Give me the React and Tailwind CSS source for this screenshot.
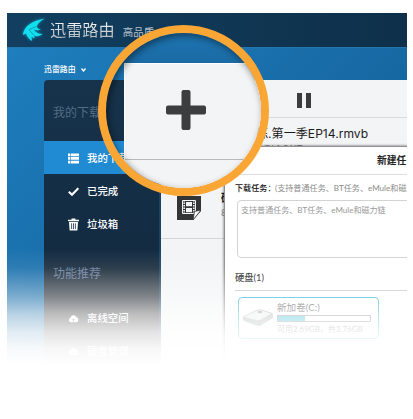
import React from 'react';

const cjk = "font-['Lato','Noto_Sans_CJK_SC',sans-serif]";

function Bird() {
  return (
    <svg viewBox="0 0 26 26" className="h-[26px] w-[26px] shrink-0 drop-shadow-[0_0_1.5px_#0aa5c8]">
      <path
        d="M24 1.5C17 2.5 9 5.5 5 10.5C3 13 2 15.5 2 18L5 16.5C6 19.5 8 22 11 24L10.5 19.8L13.5 21.5L13 18.5C16 19.8 19 19 21.5 17C17.5 17 14 15 12.5 12.5C15 13.5 18 13.5 20 12.8C17.5 12 16 11 15.5 9.5C17 6 20 3.5 24 1.5Z"
        fill="#12dfee"
      />
      <path d="M15.5 9.5L8 12.5L13 18.5" fill="none" stroke="#0b93b2" strokeWidth="0.8" />
    </svg>
  );
}

function ListIcon() {
  return (
    <svg viewBox="0 0 11 11" className="h-[11px] w-[11px]" fill="#fff">
      <path d="M0 .5h2v2.7H0zM2.6 .5H11v2.7H2.6zM0 4.1h2v2.7H0zM2.6 4.1H11v2.7H2.6zM0 7.7h2v2.7H0zM2.6 7.7H11v2.7H2.6z" />
    </svg>
  );
}

function CheckIcon() {
  return (
    <svg viewBox="0 0 11 11" className="h-[11px] w-[11px]" fill="none" stroke="#fff" strokeWidth="2.1">
      <path d="M.8 5.8L4 8.8L10.3 2.2" />
    </svg>
  );
}

function TrashIcon() {
  return (
    <svg viewBox="0 0 11 13" className="h-[13px] w-[11px]">
      <path d="M0 1.7h3.5V.4h4v1.3H11v1.5H0zM1 4h9l-.6 8.6H1.6z" fill="#fff" />
      <path d="M3.6 5.3v5.8M5.5 5.3v5.8M7.4 5.3v5.8" stroke="#142f47" strokeWidth=".8" />
    </svg>
  );
}

function CloudIcon() {
  return (
    <svg viewBox="0 0 11 9" className="h-[9px] w-[11px]">
      <path d="M2.6 8.3A2.4 2.4 0 0 1 2.4 3.7A3.2 3.2 0 0 1 8.4 3.1A2.7 2.7 0 0 1 8.5 8.3z" fill="#fff" />
      <path d="M5.5 8.4V5M4.2 6.2L5.5 4.8L6.8 6.2" fill="none" stroke="#5b6268" strokeWidth=".9" />
    </svg>
  );
}

function FilmIcon() {
  return (
    <svg viewBox="0 0 24 24" className="h-6 w-6 shrink-0">
      <path d="M0 0h24v15l-8 9H0z" fill="#333435" />
      <path d="M5.5 4.5h13v13h-13z" fill="none" stroke="#f3f4f6" strokeWidth="1" />
      <path d="M7.2 4v14M16.8 4v14" stroke="#f3f4f6" strokeWidth="1.6" strokeDasharray="1.5 1" />
      <path d="M9 6h6v4.3H9zM9 12h6v4.3H9z" fill="#f3f4f6" />
      <path d="M24 14l-6.5 1.5L16 24z" fill="#fff" stroke="#333435" strokeWidth=".8" />
    </svg>
  );
}

function DriveIcon() {
  return (
    <svg viewBox="0 0 32 18" className="h-[18px] w-8 shrink-0">
      <path d="M1 8L14 1.5Q17 .5 20 1L30 4Q31 4.5 31 6V9L19 16.5Q17 17.5 14 16.5L2 12Q1 11 1 10z" fill="#a4a8aa" />
      <path d="M1 8L14 1.5Q17 .5 20 1L30 4.5L18 11.5Q16 12 14 11.5z" fill="#e8eaeb" stroke="#888" strokeWidth=".5" />
      <ellipse cx="18" cy="3" rx="2.4" ry="1" fill="#777" />
      <path d="M17 13v3" stroke="#43b82c" strokeWidth="1.2" />
    </svg>
  );
}

function Item({ icon, label, active }) {
  return (
    <div
      className={`flex h-[33px] items-center pt-px pl-6 text-[10.4px] leading-none font-medium text-white ${
        active ? 'bg-[#208bd2]' : ''
      }`}
    >
      <span className="flex w-[19px] shrink-0 items-center">{icon}</span>
      <span className="whitespace-nowrap">{label}</span>
    </div>
  );
}

function Sidebar() {
  return (
    <aside className="h-[300px] w-[117px] shrink-0 rounded-tl border-r-2 border-[#1c4262] bg-linear-to-b from-[#17334c] via-[#122b41] via-58% to-[#2a2a2c] to-80%">
      <div className="flex h-[61px] items-center pt-[5px] pl-[9px] text-[12px] leading-none whitespace-nowrap text-[#536b85]">
        我的下载
      </div>
      <Item icon={<ListIcon />} label="我的下载" active />
      <Item icon={<CheckIcon />} label="已完成" />
      <Item icon={<TrashIcon />} label="垃圾箱" />
      <div className="flex h-[61px] items-center pt-[6px] pl-[9px] text-[12px] leading-none whitespace-nowrap text-[#667d9c]">
        功能推荐
      </div>
      <Item icon={<CloudIcon />} label="离线空间" />
      <Item icon={<CloudIcon />} label="硬盘管理" />
    </aside>
  );
}

function Content() {
  return (
    <main className="h-[300px] min-w-0 flex-1 bg-[#f3f4f6] text-[#1c1c1c]">
      <div className="flex h-[38px] items-center border-b border-[#d9dadc] pt-[3px] pl-[136px]">
        <div className="flex gap-[4px]">
          <i className="h-[15px] w-[5px] bg-[#3b3c3d]" />
          <i className="h-[15px] w-[5px] bg-[#3b3c3d]" />
        </div>
      </div>
      <div className="flex h-[60px] flex-col border-b border-[#d9dadc] pt-[9px] pl-[95px] whitespace-nowrap">
        <div className="font-['Inter','Noto_Sans_CJK_SC',sans-serif] text-[12.1px] leading-[14px]">
          练.第一季EP14.rmvb
        </div>
        <div className="pt-[3px] pl-[8px] text-[9.5px] leading-[12px] tracking-[0.3px] text-[#777]">
          剩余时间： 03:50:54
        </div>
      </div>
      <div className="flex h-[61px] items-center gap-5 border-b border-[#d5d6d8] pl-4 whitespace-nowrap">
        <FilmIcon />
        <div className="-mt-2 w-3">
          <div className="text-[11px] leading-[15px] font-bold">硬</div>
          <div className="text-[10px] leading-[14px] text-[#888]">8</div>
        </div>
      </div>
    </main>
  );
}

function Dialog() {
  return (
    <section className="absolute top-[133px] left-[217px] h-[230px] w-[190px] overflow-hidden rounded-tl-sm border-t border-l border-[#8d8f91] bg-white shadow-[-1px_-1px_2px_rgba(0,0,0,0.3)]">
      <div className="flex h-[28px] items-center border-b border-[#dedede] pl-[152px] text-[9.8px] leading-none font-bold whitespace-nowrap text-[#222]">
        新建任务
      </div>
      <div className="flex h-[25px] items-center pt-[2px] pl-[10px] text-[8.1px] leading-none whitespace-nowrap">
        <span className="w-[40px] shrink-0 font-medium text-[#111]">下载任务：</span>
        <span className="text-[#8c8c8c]">(支持普通任务、BT任务、eMule和磁力链)</span>
      </div>
      <div className="ml-[12px] h-[58px] w-[200px] rounded-sm border border-[#d3d3d3] pt-[4px] pl-[3px] text-[8.05px] leading-[10px] whitespace-nowrap text-[#999]">
        支持普通任务、BT任务、eMule和磁力链
      </div>
      <div className="ml-[10px] flex h-[33px] items-center border-b border-[#c4c4c4] pt-[7px] text-[9.3px] leading-none font-medium text-[#222]">
        硬盘(1)
      </div>
      <div className="mt-[6px] ml-[13px] flex h-[42px] w-[141px] items-center gap-[3px] rounded-[4px] border border-[#17a9cc] pl-[3px]">
        <DriveIcon />
        <div className="pt-px text-[#333]">
          <div className="text-[9.6px] leading-[15px] whitespace-nowrap">新加卷(C:)</div>
          <div className="h-[7px] w-[94px] border border-[#777]">
            <div className="h-full w-[27px] bg-[#1db4cc]" />
          </div>
          <div className="text-[8px] leading-[15px] whitespace-nowrap text-[#555]">可用2.69GB，共3.76GB</div>
        </div>
      </div>
    </section>
  );
}

function Lens() {
  return (
    <div className="absolute top-[12px] left-[91px] h-[171px] w-[171px] overflow-hidden rounded-full border-8 border-[#faa634] bg-linear-to-b from-[#1d74b1] from-0% via-[#1b6aa4] via-20% to-transparent to-20%">
      <div className="mt-[30px] ml-[18px] h-[140px] w-[140px] border-t border-l border-white bg-[#f3f4f6]">
        <div className="flex h-[96px] items-center border-b border-[#b9babc] pb-[3px] pl-[41px]">
          <svg viewBox="0 0 40 40" className="h-10 w-10">
            <path
              d="M17.5 0h5q2 0 2 2v13.5H38q2 0 2 2v5q0 2-2 2H24.5V38q0 2-2 2h-5q-2 0-2-2V24.5H2q-2 0-2-2v-5q0-2 2-2h13.5V2q0-2 2-2z"
              fill="#3c3d3f"
            />
          </svg>
        </div>
      </div>
      <div className="absolute inset-0 rounded-full shadow-[inset_2px_3px_7px_rgba(0,0,0,0.45)]" />
    </div>
  );
}

export default function App() {
  return (
    <div className={`h-[419px] w-[413px] overflow-hidden bg-white pt-[13px] pl-[7px] ${cjk}`}>
      <div className="relative h-[365px] w-[400px] overflow-hidden bg-linear-to-br from-[#1f80c1] to-[#10568b]">
        <header className="flex h-[34px] items-center bg-linear-to-r from-[#123f60] to-[#0e304a] pl-[14px] leading-none whitespace-nowrap">
          <Bird />
          <span className="ml-[3px] bg-linear-to-b from-white to-[#a9b2b9] bg-clip-text text-[16.2px] leading-[20px] text-transparent">
            迅雷路由
          </span>
          <span className="ml-2 pt-[5px] text-[10.5px] text-[#b5c1cb]">高品质</span>
        </header>
        <div className="flex h-[33px] items-center gap-[5px] border-t border-[#2377ae] pt-[12px] pl-[37px] text-[7.9px] leading-none font-medium text-white">
          迅雷路由
          <svg viewBox="0 0 5 4" className="h-1 w-[5px]" fill="none" stroke="#fff" strokeWidth="1.3">
            <path d="M.5 .5L2.5 3L4.5 .5" />
          </svg>
        </div>
        <div className="flex pl-[37px]">
          <Sidebar />
          <Content />
        </div>
        <Dialog />
        <div className="absolute inset-x-0 top-[235px] bottom-0 bg-[linear-gradient(to_bottom,transparent_0px,rgba(255,255,255,0.09)_20px,rgba(255,255,255,0.42)_48px,rgba(255,255,255,0.69)_66px,rgba(255,255,255,0.87)_84px,rgba(255,255,255,0.96)_100px,white_117px)]" />
        <Lens />
      </div>
    </div>
  );
}
